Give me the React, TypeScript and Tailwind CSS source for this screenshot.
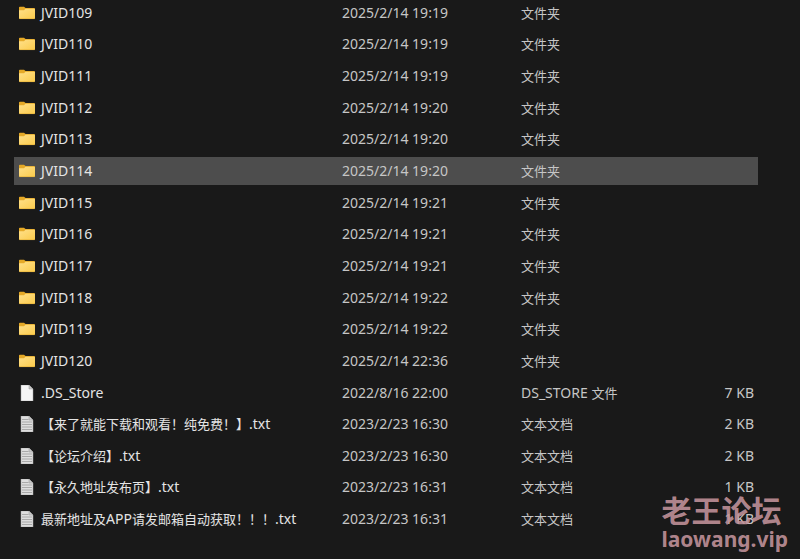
import React from 'react';
import clsx from 'clsx';

type FileKind = 'folder' | 'blank' | 'text';

interface FileEntry {
  name: string;
  modified: string;
  type: string;
  size?: string;
  kind: FileKind;
}

const folder = (name: string, modified: string): FileEntry => ({
  name,
  modified,
  type: '文件夹',
  kind: 'folder',
});

const textFile = (name: string, modified: string, size: string): FileEntry => ({
  name,
  modified,
  size,
  type: '文本文档',
  kind: 'text',
});

const FILES: FileEntry[] = [
  folder('JVID109', '2025/2/14 19:19'),
  folder('JVID110', '2025/2/14 19:19'),
  folder('JVID111', '2025/2/14 19:19'),
  folder('JVID112', '2025/2/14 19:20'),
  folder('JVID113', '2025/2/14 19:20'),
  folder('JVID114', '2025/2/14 19:20'),
  folder('JVID115', '2025/2/14 19:21'),
  folder('JVID116', '2025/2/14 19:21'),
  folder('JVID117', '2025/2/14 19:21'),
  folder('JVID118', '2025/2/14 19:22'),
  folder('JVID119', '2025/2/14 19:22'),
  folder('JVID120', '2025/2/14 22:36'),
  { name: '.DS_Store', modified: '2022/8/16 22:00', type: 'DS_STORE 文件', size: '7 KB', kind: 'blank' },
  textFile('【来了就能下载和观看！纯免费！】.txt', '2023/2/23 16:30', '2 KB'),
  textFile('【论坛介绍】.txt', '2023/2/23 16:30', '2 KB'),
  textFile('【永久地址发布页】.txt', '2023/2/23 16:31', '1 KB'),
  textFile('最新地址及APP请发邮箱自动获取！！！.txt', '2023/2/23 16:31', '1 KB'),
];

const SELECTED = 'JVID114';

function FolderIcon() {
  return (
    <svg width="16" height="16" viewBox="0 0 16 16" className="shrink-0" aria-hidden="true">
      <defs>
        <linearGradient id="folderFront" x1="0" y1="0" x2="1" y2="1">
          <stop offset="0" stopColor="#ffe08a" />
          <stop offset="1" stopColor="#fbcb4b" />
        </linearGradient>
      </defs>
      <path d="M0 2.6Q0 1.7.9 1.7H5L6.6 3.1H15.2Q16 3.1 16 4V8H0Z" fill="#e5a927" />
      <path d="M0 5.2H5L6.5 3.8H15.3Q16 3.8 16 4.6V13.1Q16 14 15.1 14H.9Q0 14 0 13.1Z" fill="url(#folderFront)" />
      <path d="M.3 13.6H15.7" stroke="#e9b53c" strokeWidth=".7" />
    </svg>
  );
}

function PageIcon({ lined }: { lined?: boolean }) {
  return (
    <svg width="16" height="16" viewBox="0 0 16 16" className="shrink-0" aria-hidden="true">
      <path
        d="M2 0H10L14 4V16H2Z"
        fill={lined ? '#dedede' : '#f6f6f6'}
        stroke="#a5a5a5"
        strokeWidth=".5"
      />
      <path d="M10 0V4H14Z" fill="#c9c9c9" stroke="#979797" strokeWidth=".5" />
      {lined && (
        <path d="M3 3.5H9.5M3 6H13M3 8.5H13M3 11H13M3 13.5H13" stroke="#a3a3a3" strokeWidth=".9" />
      )}
    </svg>
  );
}

// Han glyphs are set one step smaller than the Latin ones next to them
function MixedText({ text }: { text: string }) {
  const parts = text.split(/([\u3000-\u9fff\uff00-\uffef]+)/).filter(Boolean);
  return (
    <>
      {parts.map((part, i) => (
        <span key={i} className={/[\u3000-\u9fff\uff00-\uffef]/.test(part) ? 'text-[13px]' : 'text-[14px]'}>
          {part}
        </span>
      ))}
    </>
  );
}

function FileRow({ file }: { file: FileEntry }) {
  const selected = file.name === SELECTED;

  return (
    <tr
      aria-selected={selected}
      className={clsx('text-[#c6c6c6]', selected && 'bg-[#4d4d4d]')}
    >
      <td className="p-0 pl-[5px]">
        <div className="flex items-center gap-1.5 text-[#e4e4e4]">
          {file.kind === 'folder' ? <FolderIcon /> : <PageIcon lined={file.kind === 'text'} />}
          <span className="leading-5">
            <MixedText text={file.name} />
          </span>
        </div>
      </td>
      <td className="p-0">{file.modified}</td>
      <td className="p-0">
        <MixedText text={file.type} />
      </td>
      <td className="p-0 pr-1 text-right">{file.size}</td>
    </tr>
  );
}

export default function App() {
  return (
    <main className="relative min-h-screen overflow-hidden bg-[#191919] pr-[42px] pl-[14px] font-['Noto_Sans','Noto_Sans_CJK_SC',sans-serif]">
      <table className="-mt-[5px] h-[542px] w-full table-fixed border-separate border-spacing-x-0 border-spacing-y-1 text-left text-[14px] leading-5 whitespace-nowrap">
        <colgroup>
          <col />
          <col className="w-[179px]" />
          <col className="w-[150px]" />
          <col className="w-[87px]" />
        </colgroup>
        <tbody>
          {FILES.map((file) => (
            <FileRow key={file.name} file={file} />
          ))}
        </tbody>
      </table>

      {/* Watermark */}
      <div className="pointer-events-none absolute right-3 bottom-2 font-bold whitespace-nowrap text-[#c4949c]/90">
        <div className="text-[30px] leading-8">老王论坛</div>
        <div className="text-[21px] leading-6">laowang.vip</div>
      </div>
    </main>
  );
}
